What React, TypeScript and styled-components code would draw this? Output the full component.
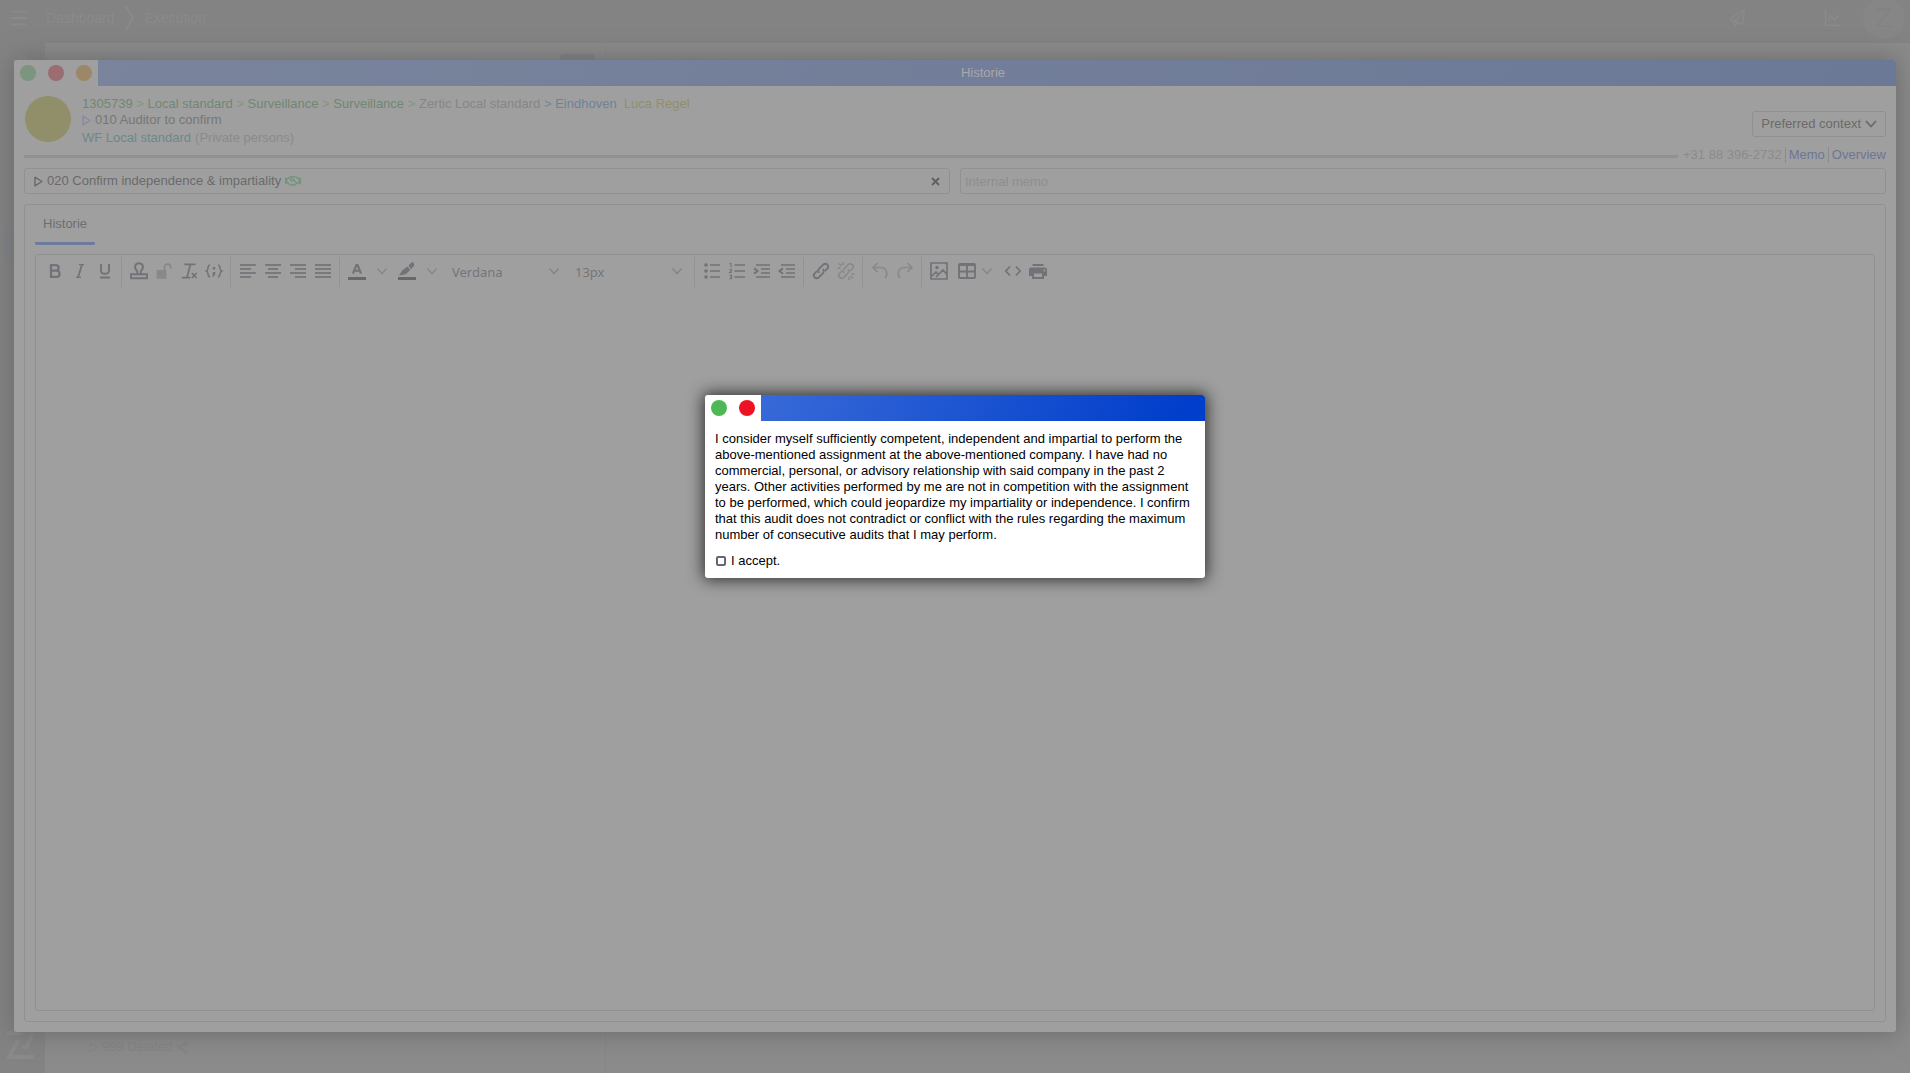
import React, { useState } from "react";
import styled, { createGlobalStyle } from "styled-components";
import { FaRegHandshake, FaRegPaperPlane } from "react-icons/fa";
import { ChartLine, Menu, Plug, Share2 } from "lucide-react";

const GlobalStyle = createGlobalStyle`
  * { box-sizing: border-box; }
  body { margin: 0; font: 13px/16px "Liberation Sans", Arial, sans-serif; color: #6a6a6a; background: #8b8b8b; }
  button, input, select, textarea { font: inherit; color: inherit; margin: 0; padding: 0; border: 0; background: none; border-radius: 0; outline: none; }
  a { color: inherit; text-decoration: none; }
  svg { display: block; flex: none; }
`;

const Page = styled.div`
  display: flex;
  flex-direction: column;
  height: 100vh;
  overflow: hidden;
`;
const TopBar = styled.header`
  display: flex;
  align-items: center;
  gap: 16px;
  height: 43px;
  flex: none;
  padding: 0 5px 8px 8px;
  background: #838383;
  color: #8a8a8a;
  font-size: 14px;
`;
const Crumbs = styled.nav`
  display: flex;
  align-items: center;
  gap: 10px;
  flex: 1;
`;
const TopIcons = styled.div`
  display: flex;
  align-items: center;
  gap: 20px;
`;
const SendIcon = styled(FaRegPaperPlane)`
  margin-right: 58px;
`;
const UserBadge = styled.button`
  width: 42px;
  height: 42px;
  border-radius: 50%;
  background: #868686;
  color: #838383;
  font-size: 28px;
`;
const Body = styled.div`
  display: flex;
  flex: 1;
`;
const Rail = styled.aside`
  display: flex;
  flex-direction: column;
  width: 45px;
  padding: 4px 5px 14px 3px;
  background: #838383;
  color: #8a8a8a;
`;
const RailLink = styled.a<{ $active?: boolean }>`
  display: grid;
  place-items: center;
  height: 32px;
  margin-bottom: 151px;
  border-radius: 3px;
  background: ${(p) => (p.$active ? "#7f8186" : "none")};
`;
const Logo = styled.svg`
  margin: auto 0 0 4px;
`;
const ListPane = styled.section`
  display: flex;
  flex-direction: column;
  justify-content: space-between;
  width: 561px;
  padding: 11px 10px 18px 20px;
  border-right: 1px solid #868686;
  color: #838383;
`;
const PaneHead = styled.div`
  display: flex;
  align-items: flex-start;
  gap: 24px;
`;
const PaneTitle = styled.h2`
  margin: 2px 0 0;
  font-size: 14px;
  line-height: 16px;
`;
const PaneButton = styled.button`
  width: 35px;
  height: 24px;
  margin-left: auto;
  border-radius: 4px;
  background: #7b7e84;
`;
const DeletedRow = styled.div`
  display: flex;
  align-items: center;
  gap: 4px;
  padding-left: 24px;
`;
const DetailPane = styled.section`
  flex: 1;
  padding: 11px 52px;
  color: #838383;
`;

const WindowFrame = styled.main`
  position: absolute;
  inset: 60px 14px 41px;
  display: flex;
  flex-direction: column;
  overflow: hidden;
  border-radius: 3px;
  background: #9f9f9f;
`;
const WindowShadow = styled.div`
  position: absolute;
  inset: 60px 14px 41px;
  border-radius: 3px;
  box-shadow: 0 0 24px 2px #6c6c6c;
`;
const TitleBar = styled.div<{ $active?: boolean }>`
  display: flex;
  flex: none;
  height: 26px;
  background: ${(p) =>
    p.$active
      ? "linear-gradient(120deg, #3f6fd9, #003ecb 95%)"
      : "linear-gradient(120deg, #7a849c, #6b7997)"};
`;
const TitleButtons = styled.div<{ $active?: boolean }>`
  display: flex;
  background: ${(p) => (p.$active ? "#fff" : "#9f9f9f")};
`;
const TitleButton = styled.button<{ $color: string }>`
  display: grid;
  place-items: center;
  width: 28px;
  &::before {
    content: "";
    width: 16px;
    height: 16px;
    border-radius: 50%;
    background: ${(p) => p.$color};
  }
`;
const TitleText = styled.div`
  flex: 1;
  padding-right: 28px;
  text-align: center;
  line-height: 26px;
  color: #a8a8a8;
`;
const Content = styled.div`
  display: flex;
  flex-direction: column;
  flex: 1;
  padding: 10px;
`;
const Head = styled.div`
  display: flex;
  align-items: flex-start;
  gap: 11px;
  height: 51px;
`;
const Avatar = styled.div`
  width: 46px;
  height: 46px;
  margin-left: 1px;
  border-radius: 50%;
  background: #908f69;
`;
const Info = styled.div`
  flex: 1;
`;
const PathLine = styled.div`
  white-space: nowrap;
`;
const Line = styled.div<{ $spaced?: boolean }>`
  display: flex;
  align-items: center;
  gap: 4px;
  margin-top: ${(p) => (p.$spaced ? "2px" : "0")};
`;
const Tint = styled.span<{ $color: string }>`
  color: ${(p) => p.$color};
`;
const TintLink = styled.a<{ $color: string }>`
  color: ${(p) => p.$color};
`;
const ContextButton = styled.button`
  display: flex;
  align-items: center;
  gap: 4px;
  height: 26px;
  margin-top: 15px;
  padding: 0 8px;
  border: 1px solid #909090;
  border-radius: 3px;
`;
const RuleRow = styled.div`
  display: flex;
  align-items: center;
  gap: 5px;
  height: 16px;
`;
const Rule = styled.hr`
  flex: 1;
  height: 3px;
  margin: 3px 0 0;
  border: 0;
  background: #919191;
`;
const Contacts = styled.div`
  display: flex;
  color: #8b8b8b;
`;
const Divider = styled.span`
  width: 1px;
  margin: 0 3px;
  background: #8b8b8b;
`;
const FieldRow = styled.div`
  display: grid;
  grid-template-columns: 1fr 1fr;
  gap: 10px;
  margin-top: 5px;
`;
const StepField = styled.div`
  display: flex;
  align-items: center;
  gap: 4px;
  height: 26px;
  padding: 0 9px;
  border: 1px solid #919191;
  border-radius: 3px;
`;
const ClearButton = styled.button`
  margin-left: auto;
  width: 9px;
`;
const MemoInput = styled.input`
  height: 26px;
  width: 100%;
  padding: 0 4px;
  border: 1px solid #919191;
  border-radius: 3px;
  &::placeholder {
    color: #8e8e8e;
    opacity: 1;
  }
`;
const Panel = styled.section`
  display: flex;
  flex-direction: column;
  flex: 1;
  margin-top: 10px;
  padding: 0 10px 10px;
  border: 1px solid #919191;
  border-radius: 3px;
`;
const Tabs = styled.div`
  display: flex;
  height: 40px;
`;
const Tab = styled.button`
  padding: 0 8px;
  border-bottom: 3px solid #6c7a9b;
  border-radius: 2px;
  color: #6c6d73;
`;
const Editor = styled.div`
  display: flex;
  flex-direction: column;
  flex: 1;
  margin-top: 9px;
  border: 1px solid #919191;
  border-radius: 3px;
`;
const Toolbar = styled.div`
  display: flex;
  height: 34px;
  padding: 2px;
`;
const Group = styled.div`
  display: flex;
  align-items: flex-start;
  padding: 0 4px;
  & + & {
    border-left: 1px solid #929292;
  }
`;
const Tool = styled.button<{ $width?: number; $gap?: number; $faint?: boolean }>`
  display: flex;
  align-items: center;
  justify-content: center;
  width: ${(p) => p.$width ?? 25}px;
  height: 28px;
  margin-left: ${(p) => p.$gap ?? 0}px;
  color: ${(p) => (p.$faint ? "#898989" : "#727378")};
`;
const FontPicker = styled.label`
  display: flex;
  align-items: center;
  width: 123px;
  height: 28px;
  padding: 0 3px 0 8px;
  color: #85868a;
`;
const FontSelect = styled.select`
  flex: 1;
  min-width: 0;
  appearance: none;
  padding-top: 2px;
  font: 13px/18px "Noto Sans", sans-serif;
  color: #74757a;
`;
const Writing = styled.textarea`
  flex: 1;
  width: 100%;
  padding: 8px;
  resize: none;
`;

const Overlay = styled.div`
  position: absolute;
  inset: 0;
  display: flex;
  justify-content: center;
  align-items: flex-start;
  padding-top: 395px;
`;
const Dialog = styled.section`
  width: 500px;
  border-radius: 3px;
  background: #fff;
  color: #000;
  box-shadow: 0 0 15px 2px #333;
`;
const DialogClip = styled.div`
  overflow: hidden;
  border-radius: 3px;
`;
const DialogBody = styled.div`
  padding: 10px 10px 9px;
`;
const Statement = styled.p`
  margin: 0;
`;
const Accept = styled.label`
  display: flex;
  align-items: center;
  gap: 5px;
  margin-top: 10px;
  padding-left: 1px;
`;
const CheckBox = styled.input`
  appearance: none;
  width: 10px;
  height: 10px;
  border: 2px solid #666674;
  border-radius: 2px;
  &:checked {
    background: #666674;
  }
`;

const Icon = ({ children, w = 1.7 }: { children: React.ReactNode; w?: number }) => (
  <svg width="20" height="20" viewBox="0 0 20 20" fill="none" stroke="currentColor" strokeWidth={w}>
    {children}
  </svg>
);
const Play = ({ color }: { color: string }) => (
  <svg width="9" height="11" viewBox="0 0 9 11" fill="none" stroke={color} strokeWidth="1.4" strokeLinejoin="round">
    <path d="M1 1.2 8 5.5 1 9.8Z" />
  </svg>
);
const Align = ({ from }: { from: number[][] }) => (
  <Icon>
    {from.map(([a, b], i) => (
      <path key={i} d={`M${a} ${4 + i * 4}H${b}`} />
    ))}
  </Icon>
);
const Chevron = () => (
  <Icon w={1.6}>
    <path d="m5.5 7.5 4.5 5 4.5-5" />
  </Icon>
);
const chain = (
  <>
    <path d="m8.2 11.8c-1.4-1.4-1.2-2.9 0-4.1l4-4.1c1.2-1.2 3-1.2 4.1 0 1.2 1.2 1.2 2.9 0 4.1l-2.5 2.5" />
    <path d="m11.8 8.2c1.4 1.4 1.2 2.9 0 4.1l-4 4.1c-1.2 1.2-3 1.2-4.1 0-1.2-1.2-1.2-2.9 0-4.1l2.5-2.5" />
  </>
);

type ToolDef = { label: string; icon: React.ReactNode; faint?: boolean; width?: number; gap?: number };

const groups: Record<string, ToolDef[]> = {
  text: [
    { label: "Bold", icon: <Icon w={2.3}><path d="M6 4.1h4.8c3.8 0 3.8 5.5 0 5.5H6zM6 9.6h5.500c4 0 4 6.300 0 6.300H6z" /></Icon> },
    { label: "Italic", icon: <Icon w={1.3}><path d="M9 3.600h5M6 16.400h5" /><path strokeWidth="1.8" d="m12 3.600-4 12.800" /></Icon> },
    { label: "Underline", icon: <Icon w={1.9}><path d="M6 3v6.200c0 4.800 8 4.800 8 0V3M5 16.500h10" /></Icon> },
  ],
  insert: [
    { label: "Stamp", icon: <Icon w={1.9}><path d="M8.300 13V10.500C4 6 6.500 2.200 10 2.200S16 6 11.700 10.500V13M2 13.300h16v4H2z" /></Icon> },
    { label: "Unlock", faint: true, icon: <Icon><path fill="currentColor" d="M3.500 9.800h8v7h-8z" /><path d="M10.500 9V6.500C10.500 2 16.700 2 16.700 6.500V8" /></Icon> },
    { label: "Clear formatting", icon: <Icon><path d="M5.500 3.300h11M11.500 3.300 8 16.500M2.800 16.700h8.500M12.800 12l4.800 5M17.600 12l-4.800 5" /></Icon> },
    { label: "Placeholder", icon: <Icon w={1.5}><path d="M6 4C3 4 4.800 9.200 2.500 10 4.800 10.800 3 16 6 16M14 4c3 0 1.200 5.200 3.500 6-2.300.8-.5 6-3.500 6" /><path strokeWidth="2.4" d="M10 6v2.400M10 11v2.400" /><path d="m10.700 12.500-2 3" /></Icon> },
  ],
  align: [
    { label: "Align left", icon: <Align from={[[2, 18], [2, 13], [2, 18], [2, 13]]} /> },
    { label: "Align centre", icon: <Align from={[[2, 18], [5, 15], [2, 18], [5, 15]]} /> },
    { label: "Align right", icon: <Align from={[[2, 18], [7, 18], [2, 18], [7, 18]]} /> },
    { label: "Justify", icon: <Align from={[[2, 18], [2, 18], [2, 18], [2, 18]]} /> },
  ],
  colour: [
    { label: "Text colour", icon: <Icon w={2.1}><path d="M6 12.500 9.400 4h1.200L14 12.500M7.300 9.800h5.400" /><path stroke="#68686a" strokeWidth="3" d="M1 17.500h18" /></Icon> },
    { label: "Text colour options", faint: true, icon: <Chevron /> },
    { label: "Highlight", icon: <Icon><path stroke="none" fill="currentColor" d="M11.500 4.500 13.500 2.500Q15-.2 17 2.600 18 4.500 15.500 6.500L13.800 8.200zM10.600 5.400l2.600 3.600-4.400 4.200L2 14.500 5.600 9z" /><path stroke="#68686a" strokeWidth="3" d="M1 17.500h18" /></Icon> },
    { label: "Highlight options", faint: true, icon: <Chevron /> },
  ],
  lists: [
    { label: "Bullet list", icon: <Icon><g fill="currentColor" stroke="none"><circle cx="4" cy="4" r="1.8" /><circle cx="4" cy="10" r="1.8" /><circle cx="4" cy="16" r="1.8" /></g><path d="M8 4h10M8 10h10M8 16h10" /></Icon> },
    { label: "Numbered list", icon: <Icon><path d="M7.500 4H18M7.500 10H18M7.500 16H18" /><path strokeWidth="1.1" d="M2.500 2.500H4v4M2.300 8.500h2.200v1.300L2.600 11.500h2.200M2.300 14.300h2.200v3.500H2.300M3 16h1.500" /></Icon> },
    { label: "Increase indent", icon: <Icon><path d="M4 4h14M9 8h9M9 12h9M4 16h14" /><path strokeWidth="2" d="M2 7.300 5.500 10 2 12.700" /></Icon> },
    { label: "Decrease indent", icon: <Icon><path d="M4 4h14M9 8h9M9 12h9M4 16h14" /><path strokeWidth="2" d="M6 7.300 2.500 10 6 12.700" /></Icon> },
  ],
  links: [
    { label: "Insert link", icon: <Icon w={1.9}>{chain}</Icon> },
    { label: "Remove link", faint: true, icon: <Icon w={1.6}>{chain}<path d="M1.500 7h3M3 2.500l2.500 2.500M7 1v3M18.500 13h-3M17 17.500 14.500 15M13 19v-3" /></Icon> },
  ],
  history: [
    { label: "Undo", faint: true, icon: <Icon><path d="M7.500 2 3 6.500 7.500 11M3 6.500h7.500c6 0 8 6.500 4.500 10.500" /></Icon> },
    { label: "Redo", faint: true, icon: <Icon><path d="M12.500 2 17 6.500 12.500 11M17 6.500H9.500c-6 0-8 6.500-4.500 10.500" /></Icon> },
  ],
  media: [
    { label: "Insert image", icon: <Icon><path d="M2 2h16v16H2zM3 15l4-4 2.500 2.500L14 9l3.500 4M7 16l2.500-2.500" /><circle cx="8" cy="6.5" r="1.7" fill="currentColor" stroke="none" /></Icon> },
    { label: "Insert table", width: 31, icon: <Icon w={1.9}><rect x="2" y="3" width="16" height="14" rx="1" /><path d="M2 4h16M2 10.500h16M10 4v13" /></Icon> },
    { label: "Table options", width: 10, faint: true, icon: <Chevron /> },
    { label: "Source code", gap: 8, icon: <Icon><path d="M7 5.500 2.800 10 7 14.500M13 5.500l4.200 4.500-4.200 4.500" /></Icon> },
    { label: "Print", icon: <Icon><path d="M4.500 4h11" strokeWidth="2" /><path fill="currentColor" stroke="none" d="M3 6.500h14q2 0 2 2V15h-3v3H4v-3H1V8.500q0-2 2-2zM6 12.500V16h8v-3.500zM15.500 8.500v1.800h1.800V8.500z" fillRule="evenodd" /></Icon> },
  ],
};

const Tools = ({ name }: { name: string }) => (
  <>
    {groups[name].map((t) => (
      <Tool key={t.label} aria-label={t.label} $faint={t.faint} $width={t.width} $gap={t.gap}>
        {t.icon}
      </Tool>
    ))}
  </>
);

const path = ["1305739", "Local standard", "Surveillance", "Surveillance"];

export default function App() {
  const [accepted, setAccepted] = useState(false);
  return (
    <>
      <GlobalStyle />
      <Page>
        <TopBar>
          <Menu size={22} />
          <Crumbs aria-label="Breadcrumb">
            <a href="#dashboard">Dashboard</a>
            <svg width="10" height="26" viewBox="0 0 10 26" fill="none" stroke="currentColor" strokeWidth="2">
              <path d="m1 1 7 12-7 12" />
            </svg>
            <a href="#execution">Execution</a>
          </Crumbs>
          <TopIcons>
            <SendIcon size={16} />
            <ChartLine size={20} />
            <UserBadge>Z</UserBadge>
          </TopIcons>
        </TopBar>
        <Body>
          <Rail>
            <RailLink href="#plugins" aria-label="Plugins"><Plug size={18} /></RailLink>
            <RailLink href="#work" aria-label="Work" $active />
            <Logo width="27" height="28" viewBox="0 0 27 28" fill="none" stroke="currentColor" strokeWidth="4">
              <path d="M0 2h16M25 2 20 16h-5M13 11H10L3 25M0 26h27" />
            </Logo>
          </Rail>
          <ListPane>
            <PaneHead>
              <PaneTitle>Workflow</PaneTitle>
              <PaneButton aria-label="Filter" />
            </PaneHead>
            <DeletedRow>
              <Play color="#868686" /> 999 Deleted <Share2 size={13} />
            </DeletedRow>
          </ListPane>
          <DetailPane>
            <PaneTitle>Certification</PaneTitle>
          </DetailPane>
        </Body>
      </Page>

      <WindowShadow />
      <WindowFrame>
        <TitleBar>
          <TitleButtons>
            <TitleButton aria-label="Save" $color="#7b957e" />
            <TitleButton aria-label="Close" $color="#9b6c72" />
            <TitleButton aria-label="Minimise" $color="#9c8868" />
          </TitleButtons>
          <TitleText>Historie</TitleText>
        </TitleBar>
        <Content>
          <Head>
            <Avatar />
            <Info>
              <PathLine>
                {path.map((p, i) => (
                  <React.Fragment key={i}>
                    <TintLink href="#item" $color="#6f8871">{p}</TintLink>{" "}
                    <Tint $color="#849285">&gt;</Tint>{" "}
                  </React.Fragment>
                ))}
                <Tint $color="#868686">Zertic Local standard</Tint> <Tint $color="#74869a">&gt;</Tint>{" "}
                <TintLink href="#place" $color="#6e829b">Eindhoven</TintLink>{" "}
                <Tint $color="#908f69">&nbsp;Luca Regel</Tint>
              </PathLine>
              <Line>
                <Play color="#8888a2" />
                <Tint $color="#767676">010 Auditor to confirm</Tint>
              </Line>
              <Line $spaced>
                <TintLink href="#workflow" $color="#6b8989">WF Local standard</TintLink>
                <Tint $color="#8a8a8a">(Private persons)</Tint>
              </Line>
            </Info>
            <ContextButton>
              Preferred context
              <svg width="12" height="8" viewBox="0 0 12 8" fill="none" stroke="currentColor" strokeWidth="1.8">
                <path d="m1 1 5 5.500L11 1" />
              </svg>
            </ContextButton>
          </Head>
          <RuleRow>
            <Rule />
            <Contacts>
              <span>+31 88 396-2732</span>
              <Divider />
              <TintLink href="#memo" $color="#6d7696">Memo</TintLink>
              <Divider />
              <TintLink href="#overview" $color="#6d7696">Overview</TintLink>
            </Contacts>
          </RuleRow>
          <FieldRow>
            <StepField>
              <Play color="#6a6a6a" />
              <span>020 Confirm independence &amp; impartiality</span>
              <FaRegHandshake size={16} color="#71937a" />
              <ClearButton aria-label="Clear step">
                <svg width="9" height="9" viewBox="0 0 9 9" fill="none" stroke="#626262" strokeWidth="2">
                  <path d="m1 1 7 7M8 1 1 8" />
                </svg>
              </ClearButton>
            </StepField>
            <MemoInput aria-label="Internal memo" placeholder="Internal memo" />
          </FieldRow>
          <Panel>
            <Tabs role="tablist">
              <Tab role="tab" aria-selected="true">Historie</Tab>
            </Tabs>
            <Editor>
              <Toolbar role="toolbar">
                <Group><Tools name="text" /></Group>
                <Group><Tools name="insert" /></Group>
                <Group><Tools name="align" /></Group>
                <Group>
                  <Tools name="colour" />
                  <FontPicker>
                    <FontSelect aria-label="Font"><option>Verdana</option></FontSelect>
                    <Chevron />
                  </FontPicker>
                  <FontPicker>
                    <FontSelect aria-label="Font size"><option>13px</option></FontSelect>
                    <Chevron />
                  </FontPicker>
                </Group>
                <Group><Tools name="lists" /></Group>
                <Group><Tools name="links" /></Group>
                <Group><Tools name="history" /></Group>
                <Group><Tools name="media" /></Group>
              </Toolbar>
              <Writing aria-label="History text" />
            </Editor>
          </Panel>
        </Content>
      </WindowFrame>

      <Overlay>
        <Dialog role="dialog" aria-modal="true">
          <DialogClip>
            <TitleBar $active>
              <TitleButtons $active>
                <TitleButton aria-label="Confirm" $color="#4fb856" />
                <TitleButton aria-label="Cancel" $color="#ee1324" />
              </TitleButtons>
            </TitleBar>
            <DialogBody>
              <Statement>
                I consider myself sufficiently competent, independent and impartial to perform the above-mentioned
                assignment at the above-mentioned company. I have had no commercial, personal, or advisory relationship
                with said company in the past 2 years. Other activities performed by me are not in competition with the
                assignment to be performed, which could jeopardize my impartiality or independence. I confirm that this
                audit does not contradict or conflict with the rules regarding the maximum number of consecutive audits
                that I may perform.
              </Statement>
              <Accept>
                <CheckBox type="checkbox" checked={accepted} onChange={(e) => setAccepted(e.target.checked)} />
                I accept.
              </Accept>
            </DialogBody>
          </DialogClip>
        </Dialog>
      </Overlay>
    </>
  );
}
